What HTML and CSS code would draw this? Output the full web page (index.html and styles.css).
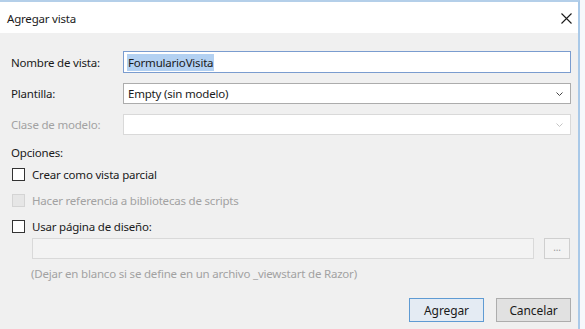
FILE: index.html
```html
<!DOCTYPE html>
<html lang="es">
<head>
    <meta charset="UTF-8">
    <title>Agregar vista</title>
    <link rel="stylesheet" href="styles.css">
</head>
<body>
    <div class="window">
        <div class="titlebar">
            <span class="title">Agregar vista</span>
            <svg class="close" width="11" height="11" viewBox="0 0 11 11">
                <path d="M0.5 0.5 L10.5 10.5 M10.5 0.5 L0.5 10.5" stroke="#1a1a1a" stroke-width="1.1" fill="none"/>
            </svg>
        </div>
        <div class="content">
            <div class="row row-name">
                <label class="lbl">Nombre de vista:</label>
                <div class="field focus"><span class="sel">FormularioVisita</span></div>
            </div>
            <div class="row row-tpl">
                <label class="lbl">Plantilla:</label>
                <div class="field combo">
                    <span>Empty (sin modelo)</span>
                    <svg class="chev" width="7" height="4" viewBox="0 0 7 4"><path d="M0.5 0.5 L3.5 3.5 L6.5 0.5" stroke="#444" fill="none"/></svg>
                </div>
            </div>
            <div class="row row-model">
                <label class="lbl off">Clase de modelo:</label>
                <div class="field combo disabled">
                    <span></span>
                    <svg class="chev" width="7" height="4" viewBox="0 0 7 4"><path d="M0.5 0.5 L3.5 3.5 L6.5 0.5" stroke="#c4c4c4" fill="none"/></svg>
                </div>
            </div>
            <div class="group">Opciones:</div>
            <div class="check check-1"><span class="box"></span>Crear como vista parcial</div>
            <div class="check check-2 off"><span class="box"></span>Hacer referencia a bibliotecas de scripts</div>
            <div class="check check-3"><span class="box"></span>Usar página de diseño:</div>
            <div class="layout-row">
                <div class="path"></div>
                <div class="browse">...</div>
            </div>
            <div class="hint">(Dejar en blanco si se define en un archivo _viewstart de Razor)</div>
            <div class="actions">
                <button class="btn default">Agregar</button>
                <button class="btn">Cancelar</button>
            </div>
        </div>
    </div>
</body>
</html>
```

FILE: styles.css
```css
*{
    margin:0;
    padding:0;
    box-sizing:border-box;
}
body{
    width:585px;
    height:329px;
    overflow:hidden;
    background:#f6f8fb;
    font-family:"Noto Sans","Open Sans",sans-serif;
    font-size:11.5px;
    letter-spacing:-0.2px;
    color:#1a1a1a;
}
.window{
    width:580px;
    height:329px;
    border-top:2px solid #b4cfe9;
    border-right:2px solid #a9c9e8;
    display:flex;
    flex-direction:column;
}
.titlebar{
    height:31px;
    background:#fff;
    display:flex;
    align-items:center;
    justify-content:space-between;
    padding:0 6px 0 7px;
}
.title{
    margin-top:2px;
}
.close{
    margin-top:1px;
}
.content{
    flex:1;
    background:#f0f0f0;
    padding:18px 0 0 11px;
    display:flex;
    flex-direction:column;
}
.row{
    display:flex;
    align-items:center;
}
.lbl{
    width:112px;
}
.off{
    color:#a2a2a2;
}
.field{
    width:448px;
    height:21px;
    background:#fff;
    border:1px solid #acacac;
    display:flex;
    align-items:center;
    padding-left:4px;
}
.field.focus{
    height:22px;
    border-color:#7a9ccf;
    padding-left:3px;
}
.sel{
    background:#b3d1f2;
    line-height:17px;
    padding:0 1px;
}
.combo{
    justify-content:space-between;
    padding-right:7px;
}
.combo.disabled{
    border-color:#d9d9d9;
}
.chev{
    margin-top:1px;
}
.row-tpl{
    margin-top:10px;
}
.row-model{
    margin-top:10px;
}
.group{
    margin-top:9px;
    height:18px;
    line-height:18px;
}
.check{
    display:flex;
    align-items:center;
    height:13px;
    margin-top:13px;
}
.check-1{
    margin-top:6px;
}
.box{
    width:13px;
    height:13px;
    border:1px solid #333;
    background:#fff;
    margin:0 7px 0 1px;
}
.check-2 .box{
    border-color:#d4d4d4;
    background:#e6e6e6;
}
.layout-row{
    display:flex;
    margin-top:5px;
    margin-left:21px;
}
.path{
    width:502px;
    height:21px;
    border:1px solid #d9d9d9;
    background:#f3f3f3;
}
.browse{
    width:26px;
    height:21px;
    margin-left:10px;
    border:1px solid #cfcfcf;
    background:#f3f3f3;
    color:#9a9a9a;
    font-size:10px;
    text-align:center;
    line-height:17px;
}
.hint{
    margin-top:6px;
    margin-left:20px;
    color:#a2a2a2;
    height:18px;
    line-height:18px;
}
.actions{
    display:flex;
    justify-content:flex-end;
    gap:12px;
    margin-top:15px;
    padding-right:7px;
}
.btn{
    width:75px;
    height:24px;
    font-family:inherit;
    font-size:12px;
    letter-spacing:-0.1px;
    color:#1a1a1a;
    background:#e1e1e1;
    border:1px solid #adadad;
}
.btn.default{
    border-color:#5f9bd3;
    background:#e4ebf3;
}
```
